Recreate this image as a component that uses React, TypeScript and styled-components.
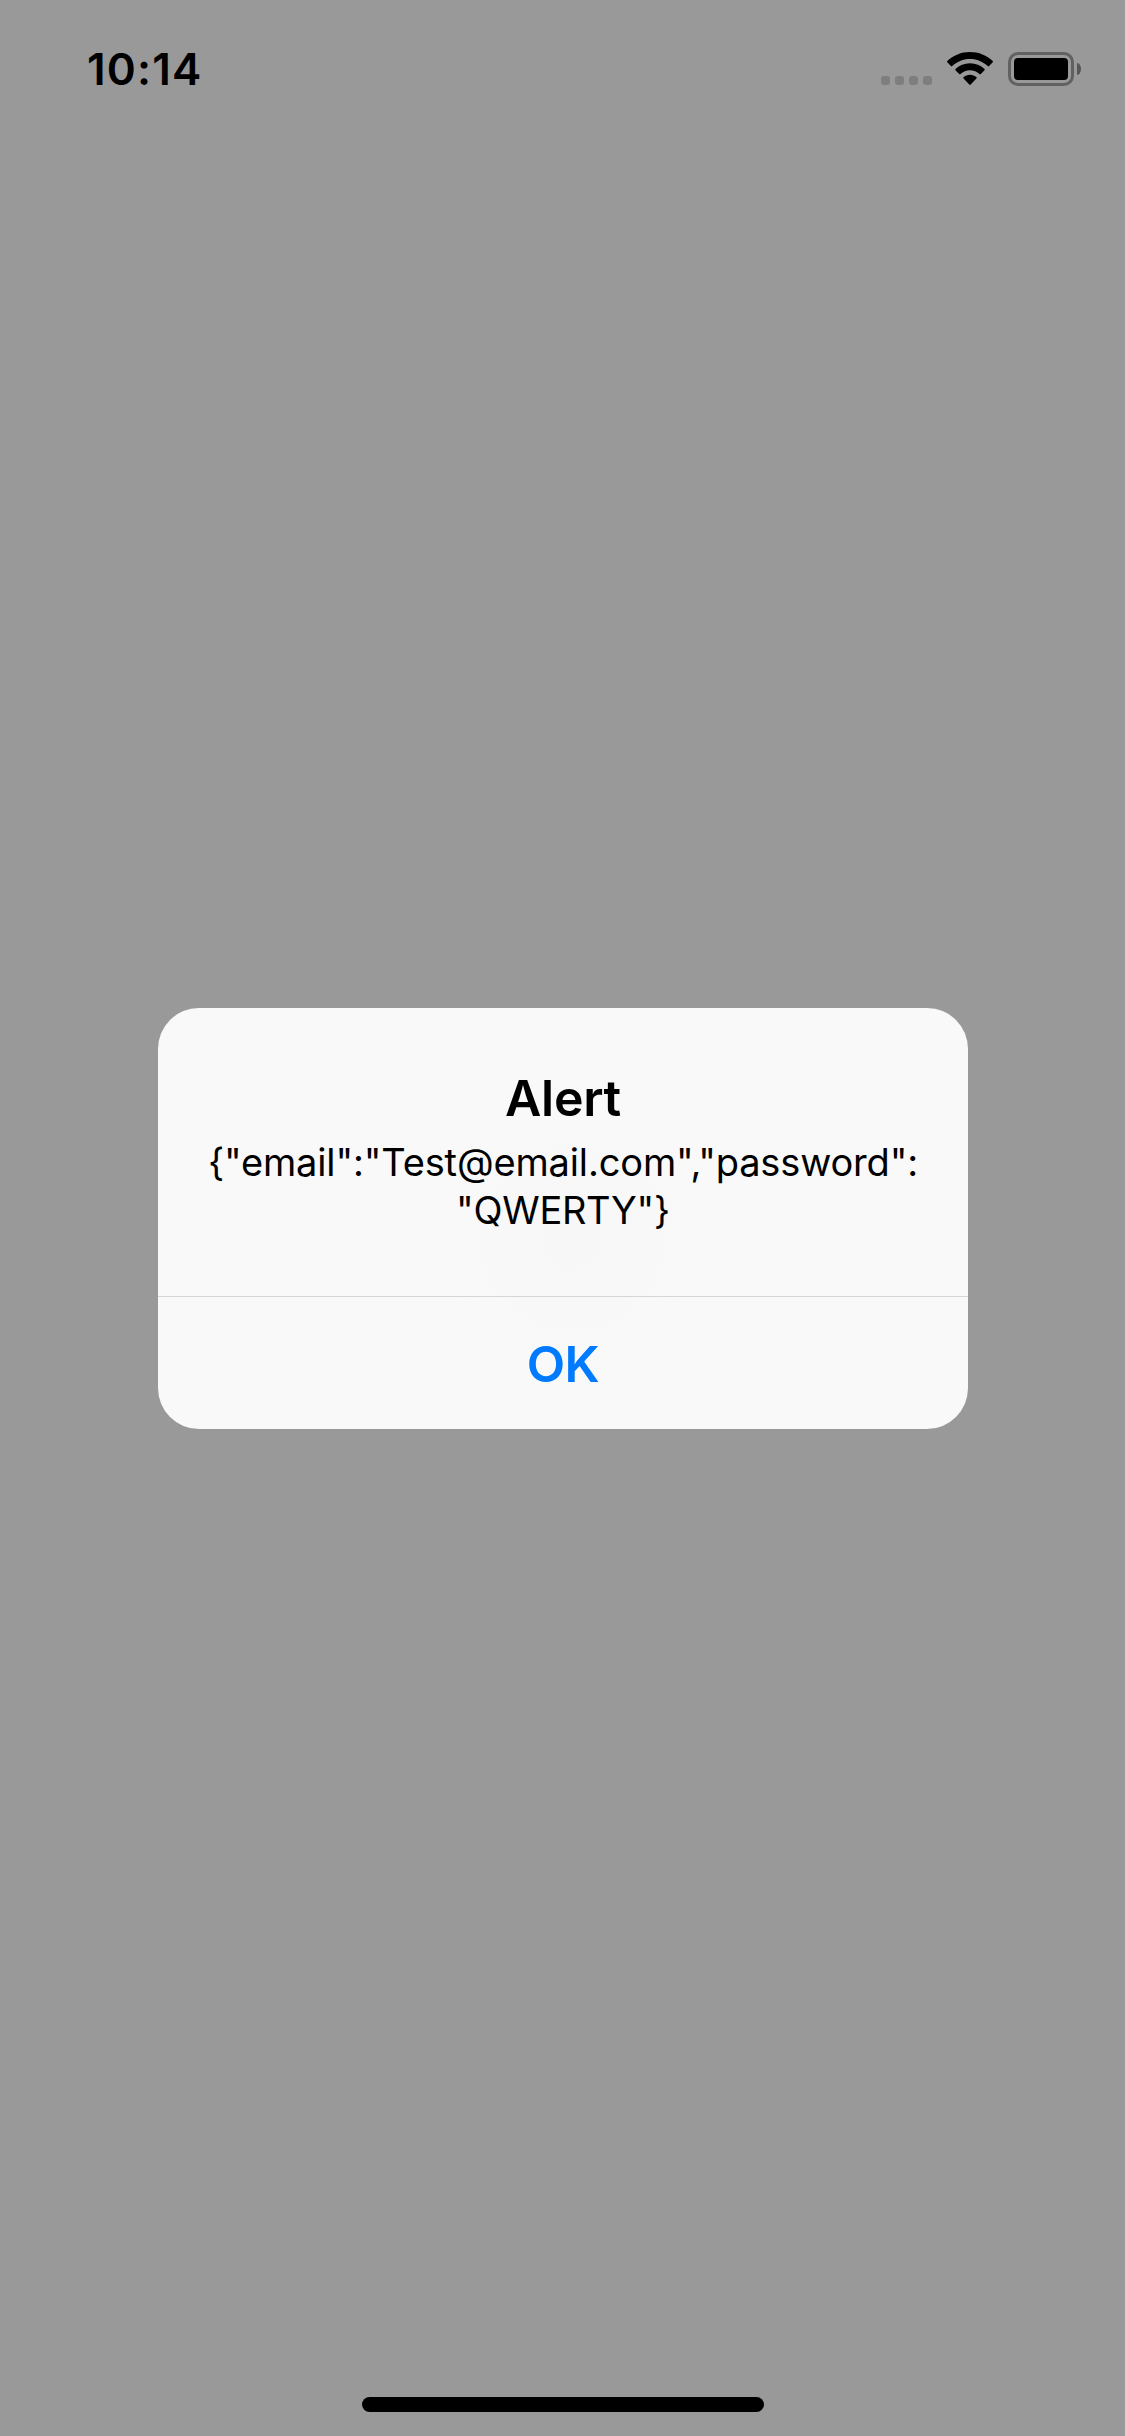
import React from "react";
import styled, { createGlobalStyle } from "styled-components";

const GlobalStyle = createGlobalStyle`
  body { margin: 0; background: #999999; }
  * { box-sizing: border-box; }
`;

const Screen = styled.div`
  width: 1125px;
  height: 2436px;
  display: grid;
  grid-template-rows: 132px 1fr 39px;
  background: #999999;
  font-family: Inter, "Liberation Sans", sans-serif;
  color: #000;
  overflow: hidden;
`;

const StatusBar = styled.header`
  display: flex;
  align-items: flex-start;
  justify-content: space-between;
  padding: 39px 44px 0 87px;
`;

const Clock = styled.time`
  font-size: 44px;
  line-height: 60px;
  font-weight: 600;
  letter-spacing: 1.2px;
`;

const Indicators = styled.div`
  display: flex;
  align-items: flex-start;
  padding-top: 13px;
`;

const Dots = styled.div`
  display: flex;
  gap: 5px;
  margin: 24px 15px 0 0;
`;

const Dot = styled.span`
  width: 9px;
  height: 9px;
  border-radius: 3px;
  background: #7e7e7e;
`;

const Wifi = styled.svg`
  width: 46px;
  height: 33px;
  margin-right: 15px;
`;

const Battery = styled.div`
  width: 66px;
  height: 34px;
  padding: 3px;
  border: 3px solid #616161;
  border-radius: 10px;
`;

const Charge = styled.div`
  height: 100%;
  border-radius: 4px;
  background: #000;
`;

const BatteryTip = styled.span`
  width: 4px;
  height: 12px;
  margin: 11px 0 0 3px;
  border-radius: 0 4px 4px 0 / 0 6px 6px 0;
  background: #565656;
`;

const Stage = styled.main`
  display: flex;
  justify-content: center;
  align-items: flex-start;
  padding: 876px 0 0 1px;
`;

const Dialog = styled.section`
  width: 810px;
  height: 421px;
  display: flex;
  flex-direction: column;
  border-radius: 41px;
  overflow: hidden;
  background: radial-gradient(circle 140px at 414px 230px, #f7f7f7, #f9f9f9 100%);
`;

const DialogBody = styled.div`
  height: 288px;
  padding-top: 60px;
  text-align: center;
`;

const Title = styled.h1`
  margin: 0;
  font-size: 50px;
  line-height: 60px;
  font-weight: 600;
  letter-spacing: -0.3px;
`;

const Message = styled.p`
  margin: 10px 0 0;
  font-size: 38px;
  line-height: 48px;
  font-weight: 400;
  white-space: nowrap;
`;

const Line = styled.span<{ $spacing: number }>`
  display: block;
  letter-spacing: ${(p) => p.$spacing}px;
`;

const Action = styled.button`
  flex: 1;
  padding: 1px 0 0;
  border: 0;
  border-top: 1px solid #d5d5da;
  background: transparent;
  color: #007aff;
  font: 600 50px/60px Inter, "Liberation Sans", sans-serif;
  letter-spacing: -0.6px;
`;

const HomeArea = styled.footer`
  display: flex;
  justify-content: center;
  padding-left: 1px;
`;

const HomeIndicator = styled.div`
  width: 402px;
  height: 15px;
  border-radius: 8px;
  background: #000;
`;

export default function App() {
  return (
    <>
      <GlobalStyle />
      <Screen>
        <StatusBar>
          <Clock>10:14</Clock>
          <Indicators>
            <Dots>
              <Dot />
              <Dot />
              <Dot />
              <Dot />
            </Dots>
            <Wifi viewBox="0 0 46 33">
              <path d="M23 0C14.2 0 6.2 3.4.3 9a.9.9 0 0 0 0 1.3l3.6 3.8c.4.4.9.4 1.3 0C9.9 9.700 16.100 7 23 7s13.100 2.700 17.800 7.100c.4.4.9.4 1.300 0l3.600-3.800a.9.9 0 0 0 0-1.300C39.800 3.400 31.800 0 23 0Z" />
              <path d="M23 11.300c-5.600 0-10.700 2.100-14.500 5.600-.4.400-.4.900 0 1.300l3.700 3.800c.4.400.9.400 1.300 0 2.500-2.300 5.800-3.700 9.500-3.700s7 1.400 9.500 3.700c.4.400.9.400 1.300 0l3.700-3.800c.4-.4.400-.9 0-1.300-3.800-3.500-8.900-5.600-14.500-5.600Z" />
              <path d="M23 22.700c-2.500 0-4.700.9-6.400 2.400-.4.400-.4.900 0 1.300l5.700 6.200c.4.500 1 .5 1.400 0l5.700-6.200c.4-.4.400-.9 0-1.300-1.700-1.500-3.900-2.400-6.400-2.400Z" />
            </Wifi>
            <Battery>
              <Charge />
            </Battery>
            <BatteryTip />
          </Indicators>
        </StatusBar>
        <Stage>
          <Dialog role="alertdialog">
            <DialogBody>
              <Title>Alert</Title>
              <Message>
                <Line $spacing={-0.15}>{'{"email":"Test@email.com","password":'}</Line>
                <Line $spacing={-0.3}>{'"QWERTY"}'}</Line>
              </Message>
            </DialogBody>
            <Action>OK</Action>
          </Dialog>
        </Stage>
        <HomeArea>
          <HomeIndicator />
        </HomeArea>
      </Screen>
    </>
  );
}
